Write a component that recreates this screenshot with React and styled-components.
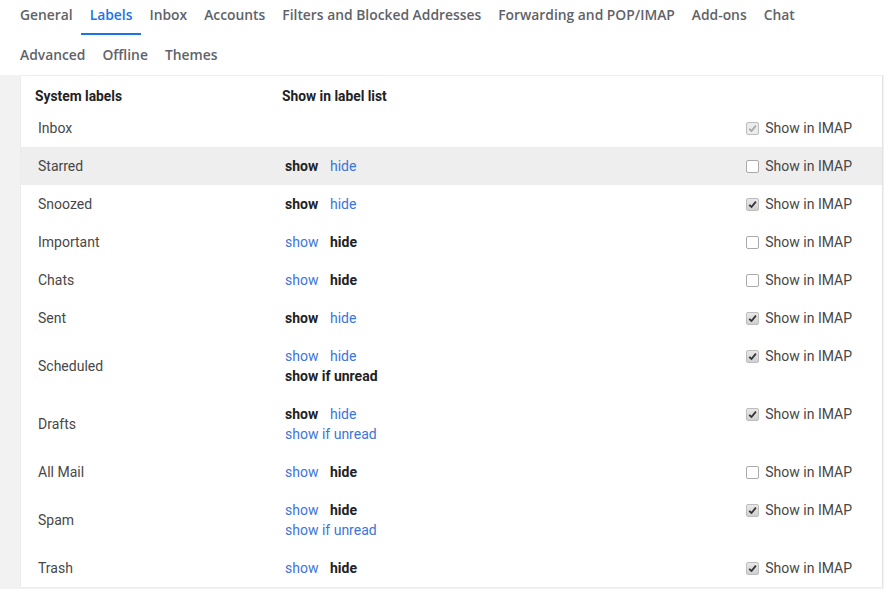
import React from 'react'
import styled, { createGlobalStyle } from 'styled-components'

const Global = createGlobalStyle`
  body {
    margin: 0;
    background: #fff;
    font-family: Roboto, "Liberation Sans", sans-serif;
  }
`

const Tabs = styled.div`
  display: flex;
  flex-direction: column;
  gap: 5px;
  padding: 0 0 0 11.5px;
`

const TabRow = styled.div`
  display: flex;
`

const Tab = styled.div`
  box-sizing: border-box;
  height: 35px;
  padding: 5px 8.5px 0;
  line-height: 20px;
  font-family: "Open Sans", sans-serif;
  font-size: 13.85px;
  font-weight: 600;
  color: ${({ $active }) => ($active ? '#1a73e8' : '#5f6368')};
  border-bottom: 2px solid ${({ $active }) => ($active ? '#1a73e8' : 'transparent')};
  white-space: nowrap;
`

const Backdrop = styled.div`
  background: #f2f2f2;
  padding: 0 1px 1px 20px;
`

const Panel = styled.div`
  background: #fff;
  border: 1px solid #ececec;
  border-right-color: #e4e4e4;
`

const Row = styled.div`
  display: grid;
  grid-template-columns: 247px 1fr auto;
  padding: ${({ $head }) => ($head ? '10px 30px 3px 14px' : '9px 30px 9px 17px')};
  background: ${({ $hl }) => ($hl ? '#eeeeee' : 'transparent')};
  line-height: 20px;
  font-size: 14px;
  color: #474747;
`

const HeadCell = styled.div`
  font-weight: 700;
  font-size: 13.8px;
  color: #222;
`

const Name = styled.div`
  align-self: center;
`

const Links = styled.div`
  display: flex;
  flex-direction: column;
`

const Line = styled.div`
  display: flex;
`

const Opt = styled.span`
  display: inline-block;
  min-width: ${({ $w }) => $w || 0}px;
  font-weight: ${({ $on }) => ($on ? 700 : 400)};
  color: ${({ $on }) => ($on ? '#222' : '#3b74dc')};
`

const Imap = styled.label`
  display: flex;
  align-items: center;
  gap: 6px;
  align-self: start;
`

const Box = styled.span`
  box-sizing: border-box;
  width: 13px;
  height: 13px;
  border-radius: 2px;
  border: 1px solid ${({ $state }) => ($state === 'off' ? '#aaaaaa' : '#bdbdbd')};
  background: ${({ $state }) =>
    $state === 'off' ? '#fff' : $state === 'disabled' ? '#ececec' : 'linear-gradient(#e8e8e8, #d0d0d0)'};
  display: flex;
  align-items: center;
  justify-content: center;
`

function Checkbox({ state }) {
  return (
    <Box $state={state}>
      {state !== 'off' && (
        <svg width="9" height="9" viewBox="0 0 9 9">
          <path
            d="M1.2 4.8 L3.5 7 L7.9 1.6"
            fill="none"
            stroke={state === 'disabled' ? '#a8a8a8' : '#333'}
            strokeWidth="1.8"
          />
        </svg>
      )}
    </Box>
  )
}

const tabs = [
  ['General', 'Labels', 'Inbox', 'Accounts', 'Filters and Blocked Addresses',
    'Forwarding and POP/IMAP', 'Add-ons', 'Chat'],
  ['Advanced', 'Offline', 'Themes'],
]

// list: which option is selected ('show' | 'hide' | 'unread'); unread: offers "show if unread"
const labels = [
  { name: 'Inbox', list: null, imap: 'disabled' },
  { name: 'Starred', list: 'show', imap: 'off', hl: true },
  { name: 'Snoozed', list: 'show', imap: 'on' },
  { name: 'Important', list: 'hide', imap: 'off' },
  { name: 'Chats', list: 'hide', imap: 'off' },
  { name: 'Sent', list: 'show', imap: 'on' },
  { name: 'Scheduled', list: 'unread', unread: true, imap: 'on' },
  { name: 'Drafts', list: 'show', unread: true, imap: 'on' },
  { name: 'All Mail', list: 'hide', imap: 'off' },
  { name: 'Spam', list: 'hide', unread: true, imap: 'on' },
  { name: 'Trash', list: 'hide', imap: 'on' },
]

export default function App() {
  return (
    <>
      <Global />
      <Tabs>
        {tabs.map((row, i) => (
          <TabRow key={i}>
            {row.map((t) => (
              <Tab key={t} $active={t === 'Labels'}>{t}</Tab>
            ))}
          </TabRow>
        ))}
      </Tabs>
      <Backdrop>
        <Panel>
          <Row $head>
            <HeadCell>System labels</HeadCell>
            <HeadCell>Show in label list</HeadCell>
            <span />
          </Row>
          {labels.map((l) => (
            <Row key={l.name} $hl={l.hl}>
              <Name>{l.name}</Name>
              <Links>
                {l.list && (
                  <Line>
                    <Opt $w={45} $on={l.list === 'show'}>show</Opt>
                    <Opt $on={l.list === 'hide'}>hide</Opt>
                  </Line>
                )}
                {l.unread && (
                  <Line>
                    <Opt $on={l.list === 'unread'}>show if unread</Opt>
                  </Line>
                )}
              </Links>
              <Imap>
                <Checkbox state={l.imap} />
                Show in IMAP
              </Imap>
            </Row>
          ))}
        </Panel>
      </Backdrop>
    </>
  )
}
